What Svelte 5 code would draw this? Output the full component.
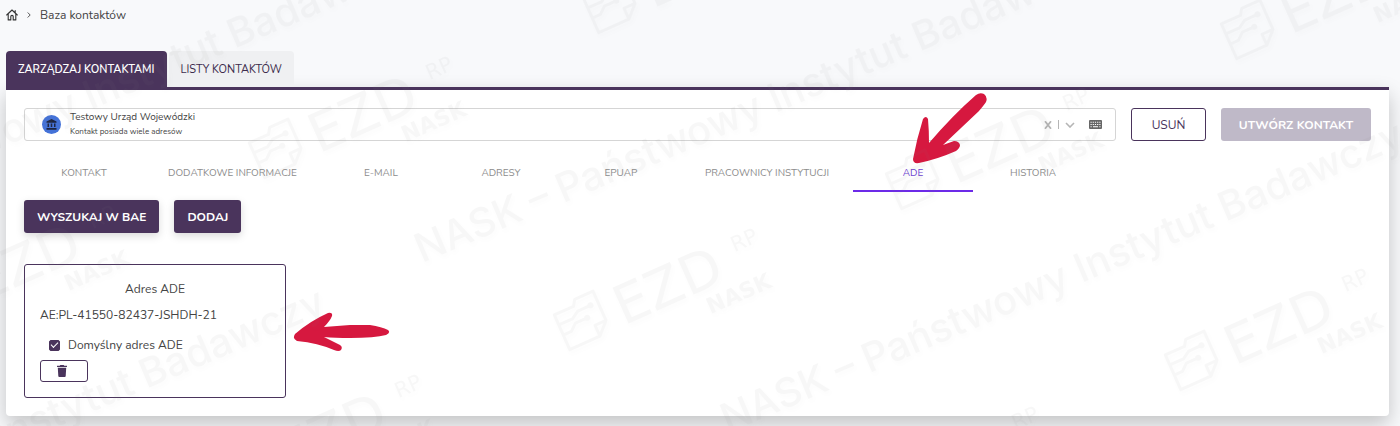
<script>
    let active = 'ADE';
    let is_default = true;

    const tabs = [
        'KONTAKT',
        'DODATKOWE INFORMACJE',
        'E-MAIL',
        'ADRESY',
        'EPUAP',
        'PRACOWNICY INSTYTUCJI',
        'ADE',
        'HISTORIA',
    ];

    // watermark tiles, all of them turned by the same angle
    const logos = [
        [609, 4],
        [1247, 30],
        [275, 149],
        [912, 180],
        [-62, 298],
        [580, 321],
        [1191, 361],
        [244, 467],
        [861, 499],
    ];
    const lines = [
        [-263, 260],
        [422, 263],
        [728, 433],
        [-351, 600],
    ];
</script>

<div class="page">
    <nav class="breadcrumb">
        <a href="#home" aria-label="Strona główna">
            <svg width="12" height="12" viewBox="0 0 12 12" fill="none" stroke="#333" stroke-width="1.1" stroke-linejoin="round" stroke-linecap="round">
                <path d="M.7 6 6 1l5.300 5M2.200 5v5.900h2.600V7.600a1.200 1.200 0 0 1 2.400 0v3.300h2.600V5M9.200 1.500v2" />
            </svg>
        </a>
        <svg width="4" height="6" viewBox="0 0 4 6" fill="none" stroke="#555"><path d="m.7.500 2.500 2.500L.7 5.500" /></svg>
        <span>Baza kontaktów</span>
    </nav>

    <div class="views">
        <button class="view current">ZARZĄDZAJ KONTAKTAMI</button>
        <button class="view">LISTY KONTAKTÓW</button>
    </div>

    <main class="panel">
        <div class="toolbar">
            <div class="picker">
                <span class="avatar">
                    <svg width="11" height="11" viewBox="0 0 22 22" fill="#1c2440">
                        <path d="M11 0 1 5v2.500h20V5zM3 9h3v7H3zM9.500 9h3v7h-3zM16 9h3v7h-3zM1 18h20v3.500H1z" />
                    </svg>
                </span>
                <div class="who">
                    <span class="name">Testowy Urząd Wojewódzki</span>
                    <span class="note">Kontakt posiada wiele adresów</span>
                </div>
                <button class="icon" aria-label="Wyczyść">
                    <svg width="8" height="8" viewBox="0 0 8 8" stroke="#b5b5b5" stroke-width="1.800"><path d="m1 .300 6 7.400M7 .300 1 7.700" /></svg>
                </button>
                <span class="divider"></span>
                <button class="icon" aria-label="Rozwiń">
                    <svg width="10" height="6" viewBox="0 0 10 6" fill="none" stroke="#b5b5b5" stroke-width="1.600"><path d="m1 1 4 4 4-4" /></svg>
                </button>
                <button class="icon keyboard" aria-label="Klawiatura">
                    <svg width="13" height="9" viewBox="0 0 26 18">
                        <rect width="26" height="18" rx="2" fill="#666" />
                        <path d="M3 4.500h20M3 9h20" stroke="#fff" stroke-width="2.400" stroke-dasharray="2.400 2" />
                        <path d="M3 13.500h2.400M8 13.500h10M20.600 13.500H23" stroke="#fff" stroke-width="2.200" />
                    </svg>
                </button>
            </div>
            <button class="btn outline">USUŃ</button>
            <button class="btn create" disabled>UTWÓRZ KONTAKT</button>
        </div>

        <div class="tabs" role="tablist">
            {#each tabs as tab}
                <button
                    class="tab"
                    class:active={tab == active}
                    role="tab"
                    aria-selected={tab == active}
                    on:click={() => {
                        active = tab;
                    }}
                >
                    {tab}
                    {#if tab == 'ADE'}
                        <svg class="arrow down" width="76" height="74" viewBox="911 91 76 74" fill="#d6183f">
                            <path d="M976 95Q980 92 984 94Q988 97 986 102Q984 105 979 111L943 145L954 141Q959 141 960 145Q960 148 956 151Q938 159 919 163Q913 164 913 159Q917 138 923 119Q926 115 928 119Q929 130 929 143Q953 115 976 95Z" />
                        </svg>
                    {/if}
                </button>
            {/each}
        </div>

        <div class="actions">
            <button class="btn solid">WYSZUKAJ W BAE</button>
            <button class="btn solid">DODAJ</button>
        </div>

        <section class="card">
            <h2>Adres ADE</h2>
            <p>AE:PL-41550-82437-JSHDH-21</p>
            <label>
                <input type="checkbox" bind:checked={is_default} />
                Domyślny adres ADE
            </label>
            <button class="remove" aria-label="Usuń adres">
                <svg width="10" height="12" viewBox="0 0 10 12" fill="#4a345c">
                    <path d="M3.300 0h3.400l.6.700H10V2H0V.7h2.700zM.8 2.700h8.400l-.5 8.300a1 1 0 0 1-1 1H2.300a1 1 0 0 1-1-1z" />
                </svg>
            </button>
            <svg class="arrow left" width="98" height="40" viewBox="293 312 98 40" fill="#d6183f">
                <path d="M295 334Q310 321 328 313Q333 312 332 316Q330 321 324 327L350 325H370Q382 327 388 330Q391 333 386 335Q375 338 350 338Q335 338 324 337L340 345Q343 347 341 350Q339 352 334 350Q318 343 297 341Q292 339 295 334Z" />
            </svg>
        </section>
    </main>

    <svg class="watermark" width="100%" height="100%" aria-hidden="true">
        {#each logos as [x, y]}
            <g transform="translate({x} {y}) rotate(-24)">
                <path
                    d="M-21-16 0-16 4-22H24V10L12 22H-21ZM24 10H12V22M-21-5H-6L2-10H14M-21 6H-12L-5 0H6"
                    fill="none"
                    stroke="#808080"
                    stroke-width="3"
                    stroke-linejoin="round"
                />
                <circle cx="16" cy="-10" r="3" />
                <circle cx="8" cy="0" r="3" />
                <text class="ezd" x="38" y="22">EZD</text>
                <text class="rp" x="169" y="0">RP</text>
                <text class="nask" x="122" y="47">NASK</text>
            </g>
        {/each}
        {#each lines as [x, y]}
            <text class="line" transform="translate({x} {y}) rotate(-23)">NASK – Państwowy Instytut Badawczy</text>
        {/each}
    </svg>
</div>

<style>
    :global(body) {
        margin: 0;
        background: #f8f9fb;
    }
    .page {
        --purple: #4a345c;
        position: relative;
        box-sizing: border-box;
        min-height: 100vh;
        padding: 0 11px 10px 6px;
        overflow: hidden;
        font-family: Nunito, Lato, sans-serif;
        font-size: 12px;
        color: #444;
    }
    button {
        font: inherit;
        color: inherit;
        margin: 0;
        padding: 0;
        border: 0;
        background: none;
        cursor: pointer;
    }
    svg {
        display: block;
    }
    .breadcrumb {
        display: flex;
        align-items: center;
        gap: 9px;
        height: 30px;
    }
    .views {
        display: flex;
        gap: 2px;
        margin-top: 21px;
    }
    .view {
        height: 36px;
        padding: 0 12px;
        border-radius: 4px 4px 0 0;
        background: #eff0f2;
        color: #3c2c4c;
        font-size: 11px;
    }
    .view.current {
        background: var(--purple);
        color: #fff;
        font-weight: 600;
    }
    .panel {
        padding: 18px;
        border-top: 3px solid var(--purple);
        border-radius: 0 0 4px 4px;
        background: #fff;
        box-shadow: 0 8px 20px rgba(0, 0, 0, 0.22);
    }
    .toolbar {
        display: flex;
        gap: 15px;
    }
    .picker {
        flex: 1;
        display: flex;
        align-items: center;
        gap: 6px;
        box-sizing: border-box;
        height: 33px;
        padding: 0 13px 0 17px;
        border: 1px solid #d5d5d5;
        border-radius: 3px;
    }
    .avatar {
        display: flex;
        align-items: center;
        justify-content: center;
        width: 19px;
        height: 19px;
        border-radius: 50%;
        background: #4472d8;
    }
    .who {
        flex: 1;
        display: flex;
        flex-direction: column;
        gap: 3px;
        padding-left: 3px;
    }
    .name {
        font-size: 10px;
        line-height: 12px;
    }
    .note {
        font-size: 8px;
        line-height: 12px;
    }
    .divider {
        width: 1px;
        height: 9px;
        background: #b5b5b5;
    }
    .keyboard {
        margin-left: 8px;
    }
    .btn {
        box-sizing: border-box;
        height: 33px;
        padding: 0 13px;
        border-radius: 3px;
        font-size: 12px;
    }
    .outline {
        width: 75px;
        border: 1px solid var(--purple);
        color: var(--purple);
    }
    .create {
        width: 150px;
        background: #bfb9c8;
        color: #fff;
        font-weight: 700;
    }
    .solid {
        background: var(--purple);
        color: #fff;
        font-weight: 700;
        box-shadow: 0 3px 8px rgba(0, 0, 0, 0.15);
    }
    .tabs {
        display: flex;
        margin-top: 15px;
    }
    .tab {
        position: relative;
        box-sizing: border-box;
        min-width: 120px;
        height: 36px;
        padding: 0 24px;
        border-bottom: 2px solid transparent;
        font-size: 10px;
        color: #8c8c8c;
        white-space: nowrap;
    }
    .tab.active {
        border-color: #6c2ae8;
        color: #6c3fd0;
    }
    .arrow {
        position: absolute;
        pointer-events: none;
    }
    .arrow.down {
        left: 58px;
        bottom: 25px;
    }
    .arrow.left {
        left: 268px;
        top: 47px;
    }
    .actions {
        display: flex;
        gap: 15px;
        margin-top: 8px;
    }
    .card {
        position: relative;
        box-sizing: border-box;
        width: 262px;
        margin-top: 31px;
        padding: 15px;
        border: 1px solid var(--purple);
        border-radius: 3px;
    }
    .card h2,
    .card p {
        margin: 0;
        font-size: 12px;
        font-weight: 400;
        line-height: 18px;
    }
    .card h2 {
        text-align: center;
    }
    .card p {
        margin-top: 8px;
    }
    .card label {
        display: flex;
        align-items: center;
        gap: 8px;
        height: 18px;
        margin: 12px 0 6px;
        padding-left: 9px;
    }
    .card input {
        appearance: none;
        position: relative;
        width: 11px;
        height: 11px;
        margin: 0;
        border: 1px solid var(--purple);
        border-radius: 2px;
        box-sizing: border-box;
    }
    .card input:checked {
        background: var(--purple);
    }
    .card input:checked::before {
        content: '';
        position: absolute;
        left: 1px;
        top: 1px;
        width: 6px;
        height: 3px;
        border: solid #fff;
        border-width: 0 0 1px 1px;
        transform: rotate(-45deg);
    }
    .remove {
        display: flex;
        align-items: center;
        justify-content: center;
        box-sizing: border-box;
        width: 48px;
        height: 22px;
        padding-right: 4px;
        border: 1px solid var(--purple);
        border-radius: 3px;
    }
    .watermark {
        position: absolute;
        inset: 0;
        pointer-events: none;
        opacity: 0.06;
        fill: #808080;
        filter: drop-shadow(2px 3px 2px rgba(128, 128, 128, 0.4));
    }
    .ezd {
        font: 54px 'DejaVu Sans', sans-serif;
    }
    .rp {
        font: 21px 'DejaVu Sans', sans-serif;
    }
    .nask {
        font: bold 22px 'DejaVu Sans', sans-serif;
    }
    .line {
        font: 500 40px Inter, sans-serif;
    }
</style>
